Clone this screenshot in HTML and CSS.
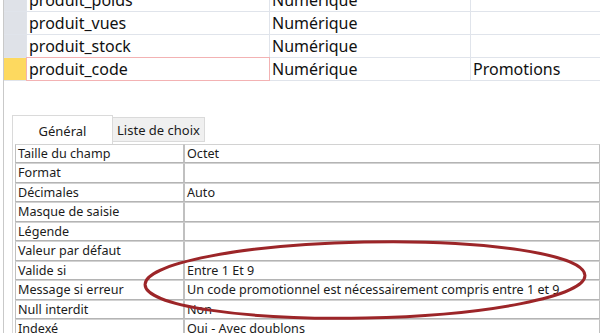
FILE: index.html
```html
<!DOCTYPE html>
<html lang="fr">
<head>
    <meta charset="UTF-8">
    <title>Création de table</title>
    <link rel="stylesheet" href="styles.css">
</head>
<body>
    <div class="design">
        <div class="fields">
            <div class="sel"></div><div class="cell">produit_poids</div><div class="cell">Numérique</div><div class="cell"></div>
            <div class="sel"></div><div class="cell">produit_vues</div><div class="cell">Numérique</div><div class="cell"></div>
            <div class="sel"></div><div class="cell">produit_stock</div><div class="cell">Numérique</div><div class="cell"></div>
            <div class="sel current"></div><div class="cell active">produit_code</div><div class="cell">Numérique</div><div class="cell">Promotions</div>
        </div>

        <div class="props">
            <div class="tabs">
                <div class="tab on">Général</div>
                <div class="tab">Liste de choix</div>
            </div>
            <div class="list">
                <div class="k">Taille du champ</div><div class="v">Octet</div>
                <div class="k">Format</div><div class="v"></div>
                <div class="k">Décimales</div><div class="v">Auto</div>
                <div class="k">Masque de saisie</div><div class="v"></div>
                <div class="k">Légende</div><div class="v"></div>
                <div class="k">Valeur par défaut</div><div class="v"></div>
                <div class="k">Valide si</div><div class="v">Entre 1 Et 9</div>
                <div class="k">Message si erreur</div><div class="v">Un code promotionnel est nécessairement compris entre 1 et 9</div>
                <div class="k">Null interdit</div><div class="v">Non</div>
                <div class="k">Indexé</div><div class="v">Oui - Avec doublons</div>
            </div>
        </div>

        <!-- cercle rouge autour de la règle de validation -->
        <svg class="mark" width="600" height="333" viewBox="0 0 600 333">
            <ellipse cx="365" cy="280" rx="220" ry="38" transform="rotate(-1.2 365 280)"
                     fill="none" stroke="#9c2528" stroke-width="3"/>
        </svg>
    </div>
</body>
</html>
```

FILE: styles.css
```css
body {
    margin: 0;
    overflow: hidden;
    background: #fff;
    font-family: "Noto Sans", "Open Sans", sans-serif;
    color: #1b1b1b;
}

.design {
    position: relative;
    height: 333px;
    margin-left: 3px;
    border-left: 1px solid #c9c9c9;
    overflow: hidden;
}

/* grille des champs */
.fields {
    display: grid;
    grid-template-columns: 22px 242px 200px 1fr;
    grid-auto-rows: 22px;
    gap: 1px;
    padding-bottom: 1px;
    margin-top: -11px;
    background: #e0e4eb;
}
.sel {
    background: #dfe2e8;
}
.sel.current {
    background: #fdd95f;
}
.cell {
    background: #fff;
    padding-left: 2px;
    font-size: 16px;
    line-height: 22px;
    color: #111;
    white-space: nowrap;
    overflow: hidden;
}
.cell.active {
    outline: 1px solid #f3b2b3;
}

/* propriétés */
.props {
    margin: 34px 0 0 8px;
    border-left: 1px solid #dadada;
}
.tabs {
    display: flex;
    align-items: flex-end;
    height: 29px;
}
.tab {
    box-sizing: border-box;
    font-size: 13px;
    text-align: center;
}
.tab.on {
    width: 100px;
    height: 29px;
    line-height: 30px;
    background: #fff;
    border-top: 1px solid #dadada;
    border-right: 1px solid #dadada;
}
.tab:not(.on) {
    width: 92px;
    height: 25px;
    line-height: 25px;
    margin-bottom: 2px;
    background: #f0f0f0;
    border: 1px solid #dadada;
    border-left: none;
}

.list {
    display: grid;
    grid-template-columns: 169px 1fr;
    grid-auto-rows: 19.45px;
    margin-left: 2px;
}
.k, .v {
    box-sizing: border-box;
    padding-left: 2px;
    font-size: 12.6px;
    line-height: 17px;
    white-space: nowrap;
    overflow: hidden;
    border-top: 1px solid #d2d2d2;
    border-bottom: 1px solid #b4b4b4;
    border-left: 1px solid #c0c0c0;
    border-right: 1px solid #c0c0c0;
}

.mark {
    position: absolute;
    left: -4px;
    top: 0;
    pointer-events: none;
}
```
